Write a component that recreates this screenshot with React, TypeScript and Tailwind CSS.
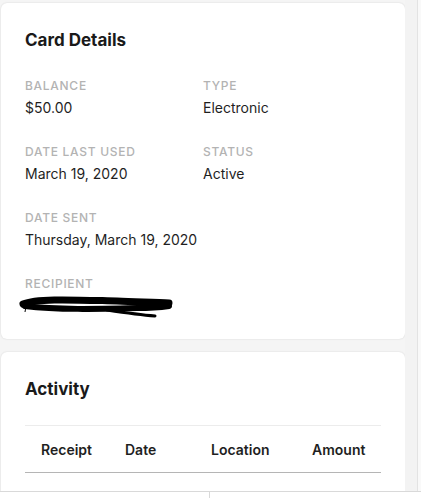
import React from 'react';

const Field = ({ label, value, children }: { label: string; value?: string; children?: React.ReactNode }) => (
  <div className="flex flex-col gap-[4px]">
    <div className="text-[12px] leading-[16px] font-medium uppercase tracking-[0.06em] text-[#b3b3b3]">{label}</div>
    {value ? <div className="text-[14px] leading-[20px] text-[#1f1f1f]">{value}</div> : children}
  </div>
);

const Scribble = () => (
  <svg width="160" height="26" viewBox="0 0 160 26" className="-ml-[8px] mt-[-2px]">
    <path d="M6 10 C20 4, 60 6, 100 7 C120 8, 140 8, 152 9" stroke="#000" strokeWidth="7" fill="none" strokeLinecap="round" />
    <path d="M8 12 C40 16, 80 15, 120 14 C135 14, 145 13, 152 12" stroke="#000" strokeWidth="6" fill="none" strokeLinecap="round" />
    <path d="M90 16 C110 19, 125 21, 138 22" stroke="#000" strokeWidth="3" fill="none" strokeLinecap="round" />
    <path d="M9 12 L8 18" stroke="#000" strokeWidth="1" />
  </svg>
);

export default function App() {
  return (
    <div className="relative h-[498px] w-[421px] overflow-hidden bg-[#f5f5f5] font-['Inter',sans-serif]">
      <div className="flex h-full">
        <div className="flex w-[405px] flex-col gap-[13px] pt-[3px] pl-[1px]">
          {/* Card details */}
          <div className="h-[336px] rounded-[6px] bg-white px-6 pt-[25px] shadow-[0_0_2px_rgba(0,0,0,0.14)]">
            <h2 className="text-[17px] leading-[24px] font-bold text-[#1a1a1a]">Card Details</h2>
            <div className="mt-[26px] grid grid-cols-[178px_1fr] gap-y-[26px]">
              <Field label="Balance" value="$50.00" />
              <Field label="Type" value="Electronic" />
              <Field label="Date Last Used" value="March 19, 2020" />
              <Field label="Status" value="Active" />
              <div className="col-span-2">
                <Field label="Date Sent" value="Thursday, March 19, 2020" />
              </div>
              <div className="col-span-2">
                <Field label="Recipient">
                  <Scribble />
                </Field>
              </div>
            </div>
          </div>

          {/* Activity */}
          <div className="flex-1 rounded-t-[6px] bg-white px-6 pt-[25px] shadow-[0_0_2px_rgba(0,0,0,0.14)]">
            <h2 className="text-[17px] leading-[24px] font-bold text-[#1a1a1a]">Activity</h2>
            <div className="mt-[24px] w-[356px] border-t border-[#ececec]">
              <div className="grid h-[47px] grid-cols-[84px_86px_101px_85px] items-center border-b border-[#b5b5b5] text-[14px] font-semibold text-[#1f1f1f]">
                <div className="pl-4">Receipt</div>
                <div className="pl-4">Date</div>
                <div className="pl-4">Location</div>
                <div className="pl-4">Amount</div>
              </div>
            </div>
          </div>
        </div>
        <div className="w-[12px] bg-[#f3f3f3]" />
        <div className="w-px bg-[#e3e3e3]" />
        <div className="flex-1 bg-[#f9f9f9]" />
      </div>

      {/* bottom toolbar */}
      <div className="absolute bottom-0 left-0 flex h-[7px] w-full border-t border-[#d9d9d9] bg-white">
        <div className="w-[210px] border-r border-[#d9d9d9]" />
      </div>
    </div>
  );
}
